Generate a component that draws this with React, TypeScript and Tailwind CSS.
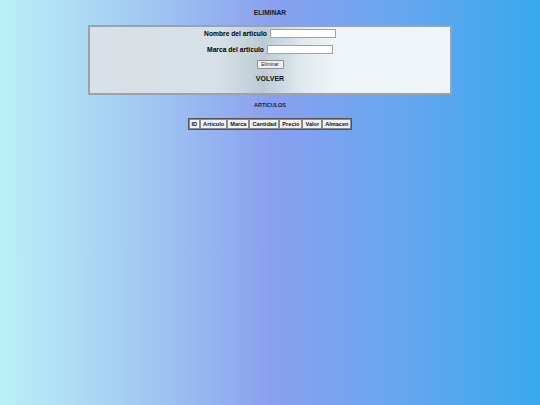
import React from 'react';

const columns = ['ID', 'Articulo', 'Marca', 'Cantidad', 'Precio', 'Valor', 'Almacen'];

const App: React.FC = () => {
  return (
    <div
      className="min-h-[405px] w-full bg-[linear-gradient(90deg,#b9f0f5_0%,#9ec3f2_30%,#8aa0ef_50%,#6aa6f0_72%,#38a9ec_100%)] text-black"
      style={{ fontFamily: '"Liberation Sans", Arial, sans-serif' }}
    >
      {/* title */}
      <div className="pt-[9px] text-center text-[6.7px] font-bold leading-[8px] text-[#111827]">
        ELIMINAR
      </div>

      {/* form card */}
      <div className="mx-[88px] mt-[8px] h-[70px] border-2 border-[#9aa3ab] bg-[linear-gradient(90deg,#d9e0e7_0%,#d7e0e6_36%,#bccbd3_48%,#e3ebf0_60%,#eef4f8_68%,#eef4f8_100%)]">
        <form className="flex flex-col items-center pt-[2px]" onSubmit={e => e.preventDefault()}>
          <div className="flex items-center gap-[3px]">
            <label className="text-[6.7px] font-bold leading-[8px]">Nombre del articulo</label>
            <input
              type="text"
              className="h-[9px] w-[66px] border border-[#9ca3af] bg-white"
            />
          </div>
          <div className="mt-[7px] flex items-center gap-[3px]">
            <label className="text-[6.7px] font-bold leading-[8px]">Marca del articulo</label>
            <input
              type="text"
              className="h-[9px] w-[66px] border border-[#9ca3af] bg-white"
            />
          </div>
          <button
            type="submit"
            className="mt-[6px] h-[9px] w-[27px] rounded-[1px] border border-[#8f8f8f] bg-[#f0f0f0] text-[4.8px] leading-[7px] text-[#222]"
          >
            Eliminar
          </button>
          <a className="mt-[6px] text-[7px] font-bold leading-[8px] text-[#111]">VOLVER</a>
        </form>
      </div>

      {/* list */}
      <div className="mt-[7px] text-center text-[5.5px] font-bold leading-[7px] text-[#1e1b4b]">
        ARTICULOS
      </div>
      <div className="mt-[9px] flex justify-center">
        <table className="border border-[#555] border-separate border-spacing-[0.5px] bg-[#e5e7eb]">
          <thead>
            <tr>
              {columns.map(c => (
                <th
                  key={c}
                  className="h-[10px] border border-[#8a8a8a] bg-[#f1f1f1] px-[2px] text-[5.6px] font-bold leading-[7px] text-[#111]"
                >
                  {c}
                </th>
              ))}
            </tr>
          </thead>
        </table>
      </div>
    </div>
  );
};

export default App;
